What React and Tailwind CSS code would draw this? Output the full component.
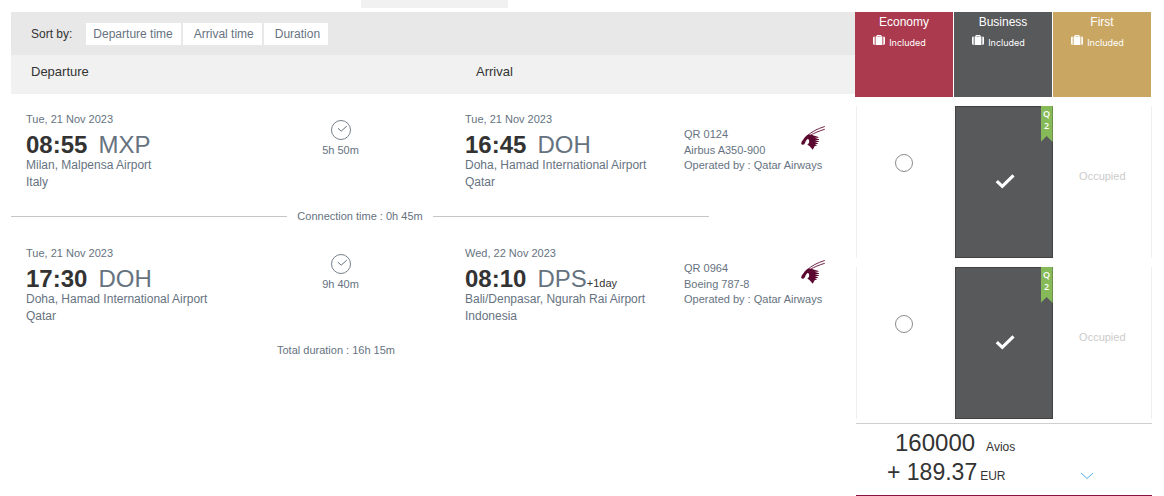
const SORTS = ['Departure time', 'Arrival time', 'Duration'];

const SEGMENTS = [
  {
    from: { date: 'Tue, 21 Nov 2023', time: '08:55', code: 'MXP', airport: 'Milan, Malpensa Airport', country: 'Italy' },
    to: { date: 'Tue, 21 Nov 2023', time: '16:45', code: 'DOH', airport: 'Doha, Hamad International Airport', country: 'Qatar' },
    duration: '5h 50m',
    flight: 'QR 0124',
    aircraft: 'Airbus A350-900',
  },
  {
    from: { date: 'Tue, 21 Nov 2023', time: '17:30', code: 'DOH', airport: 'Doha, Hamad International Airport', country: 'Qatar' },
    to: { date: 'Wed, 22 Nov 2023', time: '08:10', code: 'DPS', extra: '+1day', airport: 'Bali/Denpasar, Ngurah Rai Airport', country: 'Indonesia' },
    duration: '9h 40m',
    flight: 'QR 0964',
    aircraft: 'Boeing 787-8',
  },
];

const CABINS = [
  { name: 'Economy', color: 'bg-[#ab3a4e]' },
  { name: 'Business', color: 'bg-[#58595b]' },
  { name: 'First', color: 'bg-[#c9a763]' },
];

function ClockIcon() {
  return (
    <svg width="20" height="20" viewBox="0 0 20 20" fill="none" stroke="#66737f" aria-hidden="true">
      <circle cx="10" cy="10" r="9.500" strokeWidth=".9" />
      <path d="M7 8.300l3.200 2.900 5.600-5.100" />
    </svg>
  );
}

function SuitcaseIcon() {
  return (
    <svg width="12" height="11" viewBox="0 0 12 11" fill="#fff" aria-hidden="true">
      <path d="M1.700 1.600v8.400H1.400A1.400 1.400 0 0 1 0 8.600V3a1.400 1.400 0 0 1 1.400-1.400z" />
      <path d="M10.300 1.600V10h.3A1.400 1.400 0 0 0 12 8.600V3a1.400 1.400 0 0 0-1.400-1.400z" />
      <path d="M2.600 10V1.600h.9V1c0-.6.4-1 1-1h3c.6 0 1 .4 1 1v.6h.9V10zM4.500 1.600h3V.9h-3z" />
    </svg>
  );
}

function OryxLogo() {
  return (
    <svg width="24" height="24" viewBox="0 0 24 24" role="img" aria-label="Qatar Airways">
      <g fill="none" stroke="#5c0931" strokeLinecap="round" strokeWidth=".9">
        <path d="M6 10C11 5.500 16 3 23.400.6" />
        <path d="M9.500 9.200C13.500 7 18 5 23.400 3.400" />
      </g>
      <path
        fill="#5c0931"
        d="M.2 17.600c.2-1.800 1-3 2.100-4.200C3.500 11.600 5 9.900 7.200 8.600L11 9l6.500 1.900v.9h-4l4.500 1.400v.8h-4.200l4 1.200v.8h-3.900l2.900 1.200v.8h-3l1.900 1-.1.800-1.800.3-2.100 3.600c-1-1.400-2-2.200-3-3.400L6.300 18.600c1.700-1.100 2.100-2.500 1.800-4.100-.2-1-.8-1.700-1.600-1.600-1 .8-1.700 1.800-2.200 3.300-.4 1.200-1.100 2.300-2.200 2.500-1.100.2-1.900-.3-1.900-1.100z"
      />
    </svg>
  );
}

function Stop({ date, time, code, extra, airport, country }) {
  return (
    <div className="whitespace-nowrap">
      <p className="text-[11px] leading-4">{date}</p>
      <p className="mt-1.5 flex items-baseline text-2xl leading-6">
        <strong className="mr-[11px] font-bold text-[#333]">{time}</strong>
        {code}
        {extra && <span className="text-[11px] leading-4 text-[#333]">{extra}</span>}
      </p>
      <p className="text-xs leading-[17px]">{airport}</p>
      <p className="text-xs leading-[17px]">{country}</p>
    </div>
  );
}

function Segment({ segment }) {
  return (
    <div className="grid grid-cols-[190fr_249fr_219fr_160fr] pr-[11px] pl-[15px]">
      <Stop {...segment.from} />
      <div className="flex flex-col items-center pt-[9px]">
        <ClockIcon />
        <p className="mt-0.5 text-[11px] leading-4">{segment.duration}</p>
      </div>
      <Stop {...segment.to} />
      <div className="pt-[15px] text-[11px] leading-4 whitespace-nowrap">
        <div className="flex w-[141px] items-start justify-between">
          <div>
            <p>{segment.flight}</p>
            <p>{segment.aircraft}</p>
          </div>
          <OryxLogo />
        </div>
        <p className="leading-[15px]">Operated by : Qatar Airways</p>
      </div>
    </div>
  );
}

function FareRow({ id }) {
  return (
    <div
      role="radiogroup"
      aria-label={`Cabin for option ${id}`}
      className="grid h-[152px] grid-cols-3 grid-rows-1 gap-px border-x border-[#efefef]"
    >
      <label className="flex items-start justify-center border-r border-[#f8f8f8] pt-12 pr-0.5">
        <input
          type="radio"
          name={`cabin-${id}`}
          aria-label="Economy"
          className="size-[18px] appearance-none rounded-full border border-[#8c8c8c] checked:bg-[#8c8c8c]"
        />
      </label>
      <label className="relative flex items-center justify-center border border-[#414142] bg-[#58595b]">
        <input
          type="radio"
          name={`cabin-${id}`}
          aria-label="Business"
          defaultChecked
          className="absolute inset-0 appearance-none"
        />
        <svg width="22" height="18" viewBox="0 0 22 18" fill="none" stroke="#fff" strokeWidth="3.200" aria-hidden="true">
          <path d="M3.800 8.200l5.500 5.200L20.500 2.400" />
        </svg>
        <span className="absolute -top-px -right-px flex h-9 w-3 flex-col items-center bg-[#86ba58] pt-0.5 font-['Open_Sans',sans-serif] text-[9px] leading-3 font-semibold text-white [clip-path:polygon(0_0,100%_0,100%_100%,50%_83%,0_100%)]">
          <span>Q</span>
          <span>2</span>
        </span>
      </label>
      <div className="flex justify-center pt-[62px] text-[11px] leading-4 text-[#cbcbcb]">Occupied</div>
    </div>
  );
}

function Fares() {
  return (
    <aside className="w-[297px] shrink-0">
      <div className="mr-px grid grid-cols-3 gap-px">
        {CABINS.map((cabin) => (
          <div key={cabin.name} className={`flex h-[85px] flex-col items-center text-white ${cabin.color}`}>
            <h2 className="pt-0.5 text-xs leading-4">{cabin.name}</h2>
            <p className="mt-[5px] mr-[9px] flex items-start gap-1 font-['Inter',sans-serif] text-[9px] leading-4">
              <SuitcaseIcon />
              <span>Included</span>
            </p>
          </div>
        ))}
      </div>
      <div className="mt-[9px] ml-px flex flex-col gap-[9px]">
        <FareRow id={1} />
        <FareRow id={2} />
      </div>
      <div className="mt-1 ml-px flex h-[73px] items-end justify-between border-t border-b border-t-[#cfcfcf] border-b-[#8a1048] pr-[58px] pl-[31px] text-[#333]">
        <div className="pb-2">
          <p className="flex items-baseline gap-[11px] pl-2 text-2xl leading-[30px]">
            160000 <span className="text-xs">Avios</span>
          </p>
          <p className="flex items-baseline gap-[3px] text-[23px] leading-[29px]">
            + 189.37 <span className="text-xs">EUR</span>
          </p>
        </div>
        <button type="button" aria-label="Show price details" className="pb-[15px]">
          <svg width="14" height="8" viewBox="0 0 14 8" fill="none" stroke="#4fb0ea" aria-hidden="true">
            <path d="M1 1l6 5.500L13 1" />
          </svg>
        </button>
      </div>
    </aside>
  );
}

export default function App() {
  return (
    <div className="bg-white pr-3 pl-[11px] font-['Liberation_Sans',Arial,sans-serif] text-[#66737f]">
      <div className="mb-1 ml-[350px] h-2 w-[147px] bg-[#f1f1f1]" />
      <main className="flex items-start">
        <section className="min-w-0 flex-1">
          <div className="flex h-[43px] items-center gap-0.5 bg-[#e8e8e8] pl-5 text-xs">
            <span className="mr-3 text-[#333]">Sort by:</span>
            {SORTS.map((sort) => (
              <button key={sort} type="button" className="h-[22px] bg-white pr-2 pl-[11px] first-of-type:pl-[7px]">
                {sort}
              </button>
            ))}
          </div>
          <div className="grid h-[39px] grid-cols-[445fr_379fr] bg-[#f1f1f1] pt-[9px] pl-5 text-[13px] leading-4 text-[#333]">
            <h2>Departure</h2>
            <h2>Arrival</h2>
          </div>
          <div className="pt-[17px]">
            <Segment segment={SEGMENTS[0]} />
            <div className="mt-[17px] mr-[146px] mb-[21px] flex items-center gap-2.5 text-[11px] leading-4">
              <span className="h-px flex-1 bg-[#c4c7ca]" />
              <p>Connection time : 0h 45m</p>
              <span className="h-px flex-1 bg-[#c4c7ca]" />
            </div>
            <Segment segment={SEGMENTS[1]} />
            <p className="mt-[17px] mr-[194px] text-center text-[11px] leading-4">Total duration : 16h 15m</p>
          </div>
        </section>
        <Fares />
      </main>
    </div>
  );
}
